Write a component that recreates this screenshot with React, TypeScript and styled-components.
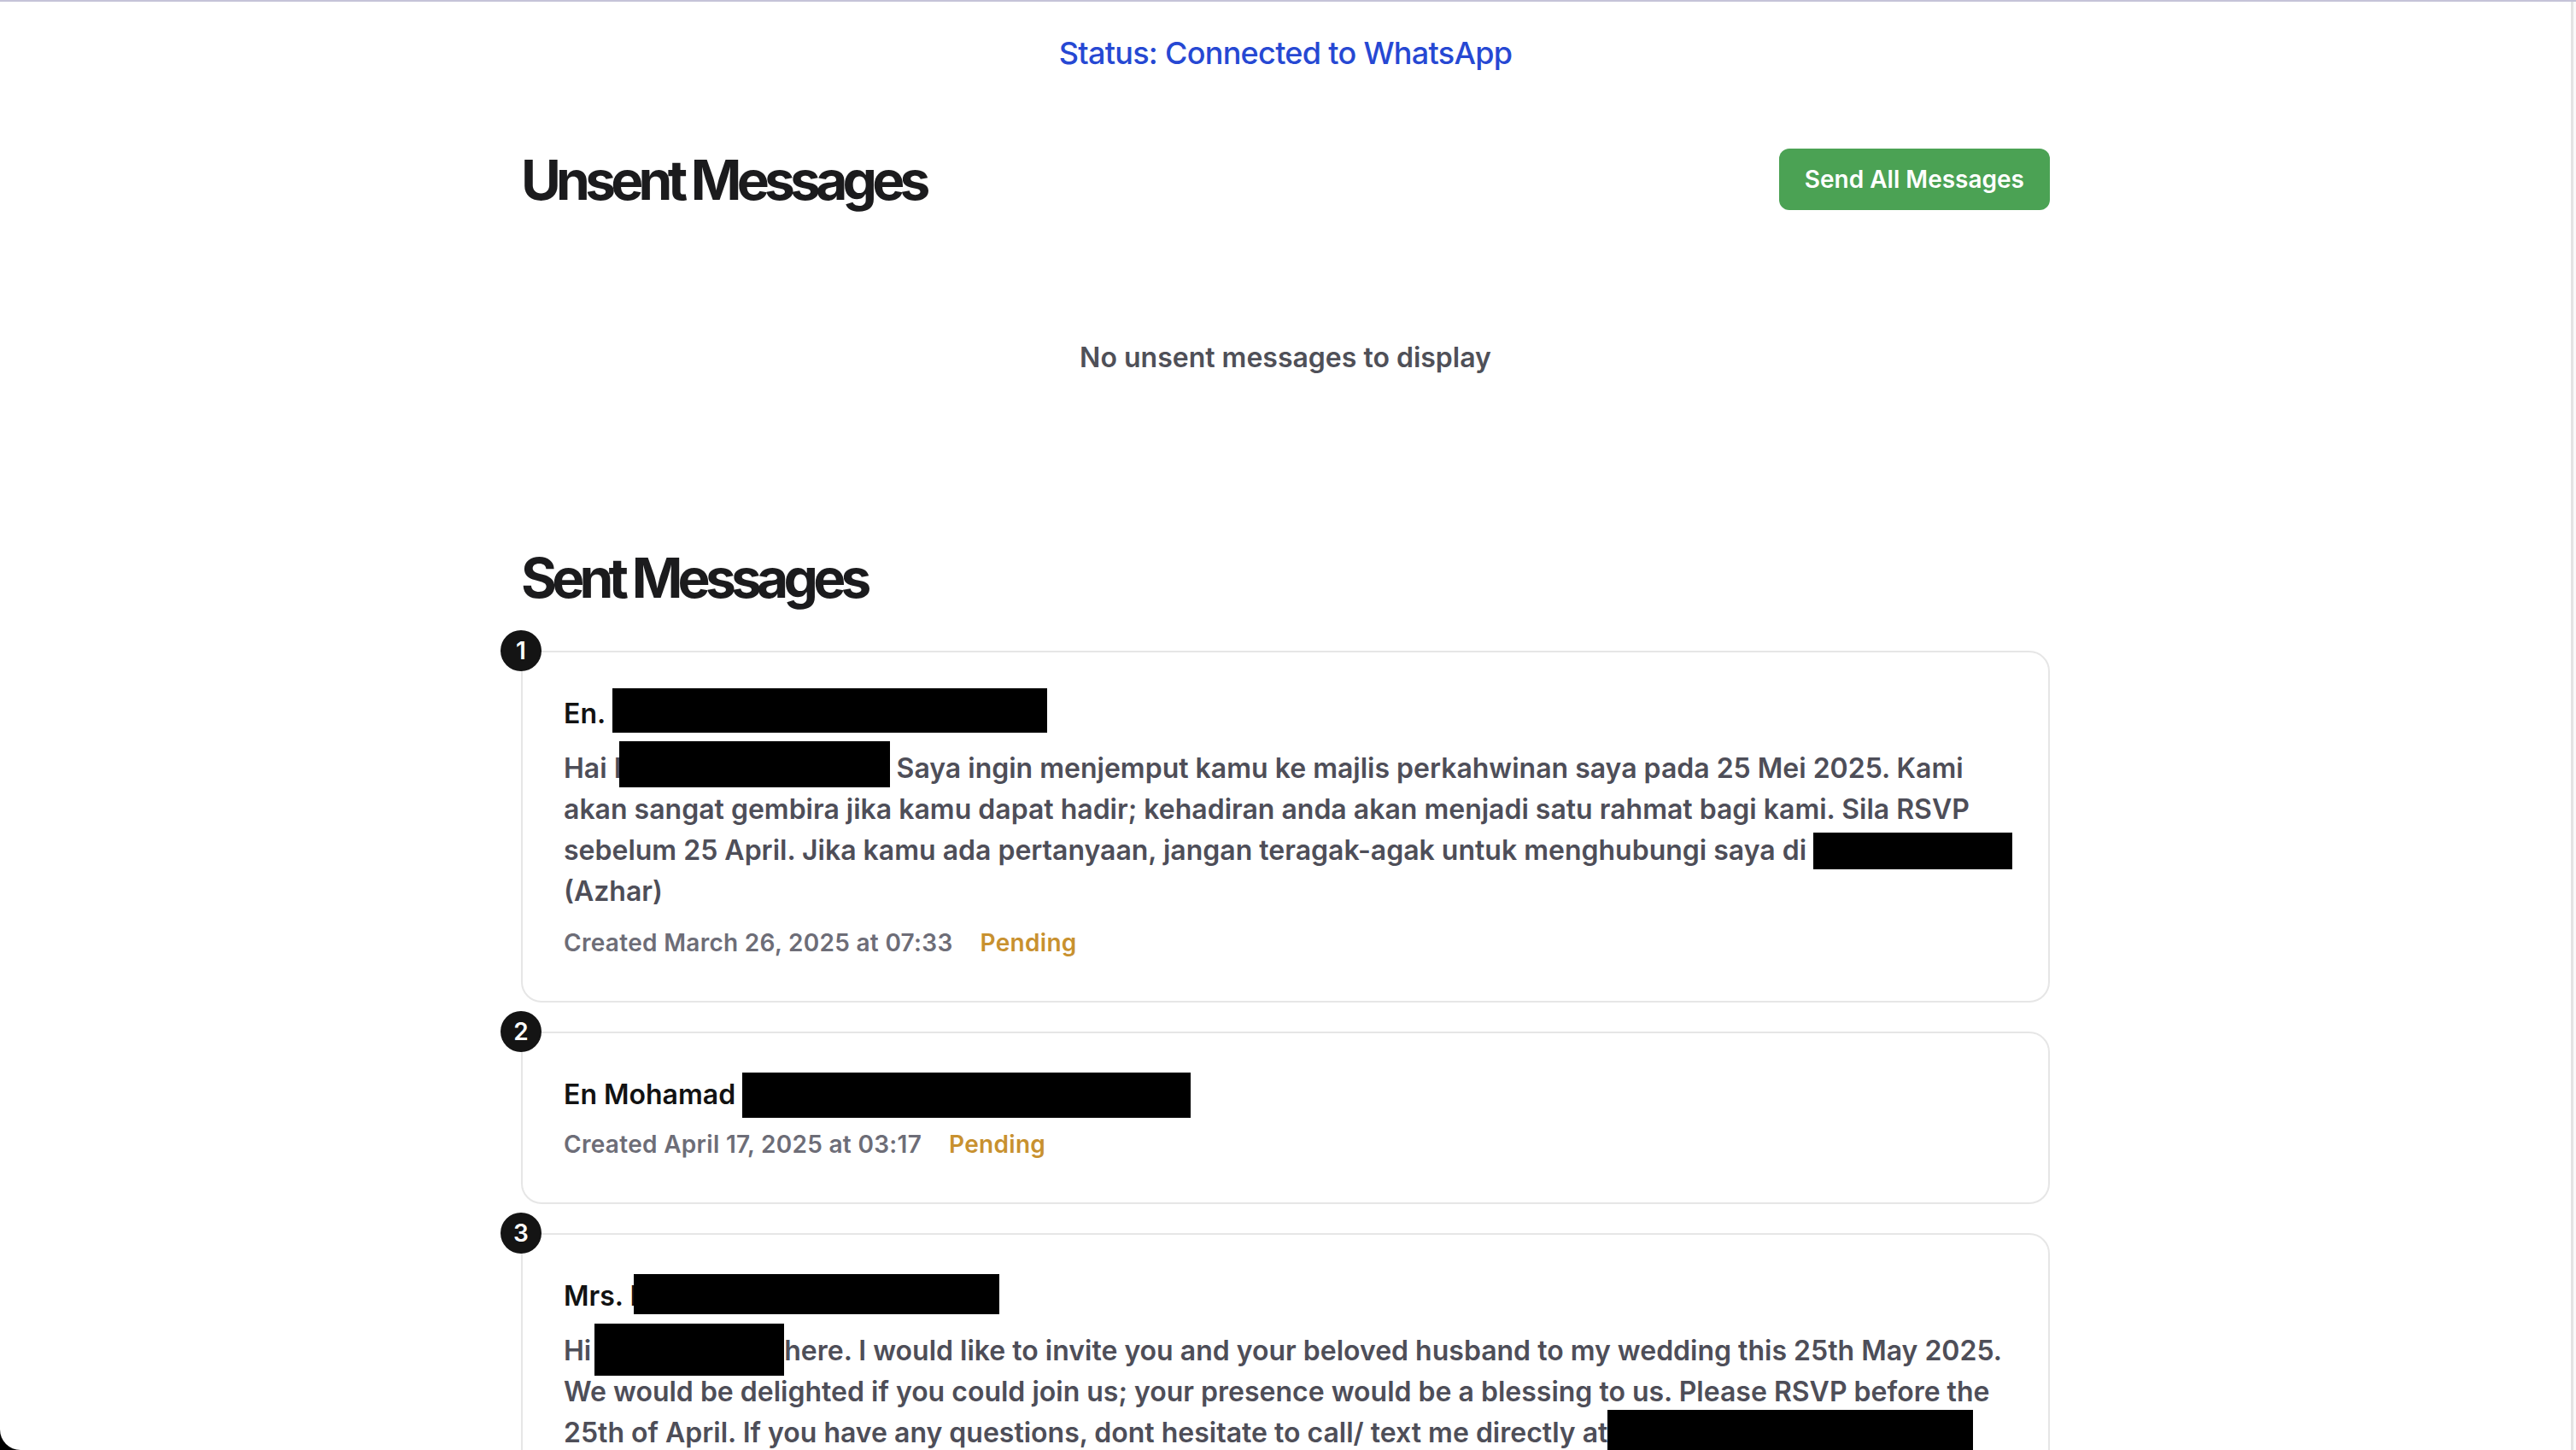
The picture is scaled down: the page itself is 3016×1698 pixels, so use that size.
import React from 'react';
import styled, { createGlobalStyle } from 'styled-components';

const GlobalStyle = createGlobalStyle`
  html, body {
    margin: 0;
    padding: 0;
    background: #000;
  }
  body {
    font-family: Inter, "Noto Sans", "Liberation Sans", sans-serif;
    -webkit-font-smoothing: antialiased;
  }
`;

// window frame: lavender top edge, rounded bottom-left corner, scroll track on the right
const Frame = styled.div`
  display: flex;
  height: 100vh;
  background: #fff;
  border-top: 2px solid #c5c3d8;
  border-bottom-left-radius: 24px;
  overflow: hidden;
  box-sizing: border-box;
`;

const Page = styled.main`
  flex: 1;
  min-width: 0;
`;

const ScrollTrack = styled.div`
  width: 3px;
  border-left: 3px solid #e3e3e3;
  background: #fafafa;
`;

const Status = styled.div`
  padding-top: 32px;
  text-align: center;
  color: #2648d3;
  font-size: 36px;
  line-height: 56px;
  font-weight: 500;
  letter-spacing: -0.7px;
`;

const Container = styled.div`
  width: 1790px;
  margin: 0 auto;
`;

const HeaderRow = styled.div`
  display: flex;
  justify-content: space-between;
  align-items: flex-start;
  margin-top: 80px;
`;

const Heading = styled.h2<{ $offset?: number }>`
  margin: ${p => p.$offset ?? 0}px 0 0;
  font-size: 64px;
  line-height: 80px;
  font-weight: 700;
  letter-spacing: -0.09em;
  color: #1b1b1d;
`;

const SendButton = styled.button`
  margin-top: 4px;
  height: 72px;
  padding: 0 30px;
  border: none;
  border-radius: 12px;
  background: #4ba254;
  color: #fff;
  font-family: inherit;
  font-size: 28px;
  line-height: 40px;
  font-weight: 600;
  cursor: pointer;
`;

const EmptyState = styled.p`
  margin: 0;
  padding: 144px 0 194px;
  text-align: center;
  font-size: 32px;
  line-height: 48px;
  font-weight: 600;
  color: #4f5058;
`;

const SentHeading = styled(Heading)`
  margin-bottom: 45px;
`;

const CardList = styled.div`
  display: flex;
  flex-direction: column;
  gap: 34px;
`;

const Card = styled.div`
  position: relative;
  border: 2px solid #e6e6e6;
  border-radius: 24px;
  padding: 48px;
  background: #fff;
`;

const IndexBadge = styled.span`
  position: absolute;
  top: -26px;
  left: -26px;
  width: 48px;
  height: 48px;
  border-radius: 50%;
  background: #141414;
  color: #fff;
  display: flex;
  align-items: center;
  justify-content: center;
  font-size: 28px;
  font-weight: 600;
`;

const Recipient = styled.div`
  font-size: 32px;
  line-height: 48px;
  font-weight: 600;
  color: #121212;
  white-space: nowrap;
`;

const Body = styled.p`
  margin: 16px 0 0;
  font-size: 32px;
  line-height: 48px;
  font-weight: 600;
  color: #4e4e58;
  white-space: nowrap;
`;

const Meta = styled.div<{ $gap?: number }>`
  display: flex;
  gap: 32px;
  margin-top: ${p => p.$gap ?? 16}px;
  font-size: 28px;
  line-height: 40px;
  font-weight: 600;
  letter-spacing: 0.3px;
`;

const Created = styled.span`
  color: #6d6d77;
`;

const StatusTag = styled.span`
  color: #c8912f;
`;

// black box laid over redacted text in the screenshot
const Redact = styled.span<{ $w: number; $h: number; $y: number; $ml?: number }>`
  display: inline-block;
  vertical-align: top;
  position: relative;
  top: ${p => p.$y}px;
  width: ${p => p.$w}px;
  height: ${p => p.$h}px;
  margin-bottom: -${p => p.$h}px;
  margin-left: ${p => p.$ml ?? 0}px;
  background: #000;
`;

const App: React.FC = () => {
  return (
    <>
      <GlobalStyle />
      <Frame>
        <Page>
          <Status>Status: Connected to WhatsApp</Status>
          <Container>
            <HeaderRow>
              <Heading $offset={1}>Unsent Messages</Heading>
              <SendButton>Send All Messages</SendButton>
            </HeaderRow>
            <EmptyState>No unsent messages to display</EmptyState>

            <SentHeading>Sent Messages</SentHeading>
            <CardList>
              <Card>
                <IndexBadge>1</IndexBadge>
                <Recipient>
                  En. <Redact $w={509} $h={52} $y={-6} />
                </Recipient>
                <Body>
                  Hai I<Redact $w={317} $h={54} $y={-8} $ml={-3} /> Saya ingin menjemput kamu ke majlis perkahwinan saya pada 25 Mei 2025. Kami
                  <br />
                  akan sangat gembira jika kamu dapat hadir; kehadiran anda akan menjadi satu rahmat bagi kami. Sila RSVP
                  <br />
                  sebelum 25 April. Jika kamu ada pertanyaan, jangan teragak-agak untuk menghubungi saya di{' '}
                  <Redact $w={233} $h={43} $y={3} />
                  <br />
                  (Azhar)
                </Body>
                <Meta>
                  <Created>Created March 26, 2025 at 07:33</Created>
                  <StatusTag>Pending</StatusTag>
                </Meta>
              </Card>

              <Card>
                <IndexBadge>2</IndexBadge>
                <Recipient>
                  En Mohamad <Redact $w={525} $h={53} $y={-2} />
                </Recipient>
                <Meta $gap={14}>
                  <Created>Created April 17, 2025 at 03:17</Created>
                  <StatusTag>Pending</StatusTag>
                </Meta>
              </Card>

              <Card>
                <IndexBadge>3</IndexBadge>
                <Recipient>
                  Mrs. I<Redact $w={428} $h={47} $y={-2} $ml={-4} />
                </Recipient>
                <Body>
                  Hi<Redact $w={222} $h={61} $y={-8} $ml={4} />here. I would like to invite you and your beloved husband to my wedding this 25th May 2025.
                  <br />
                  We would be delighted if you could join us; your presence would be a blessing to us. Please RSVP before the
                  <br />
                  25th of April. If you have any questions, dont hesitate to call/ text me directly at
                  <Redact $w={428} $h={60} $y={-3} />
                </Body>
              </Card>
            </CardList>
          </Container>
        </Page>
        <ScrollTrack />
      </Frame>
    </>
  );
};

export default App;
